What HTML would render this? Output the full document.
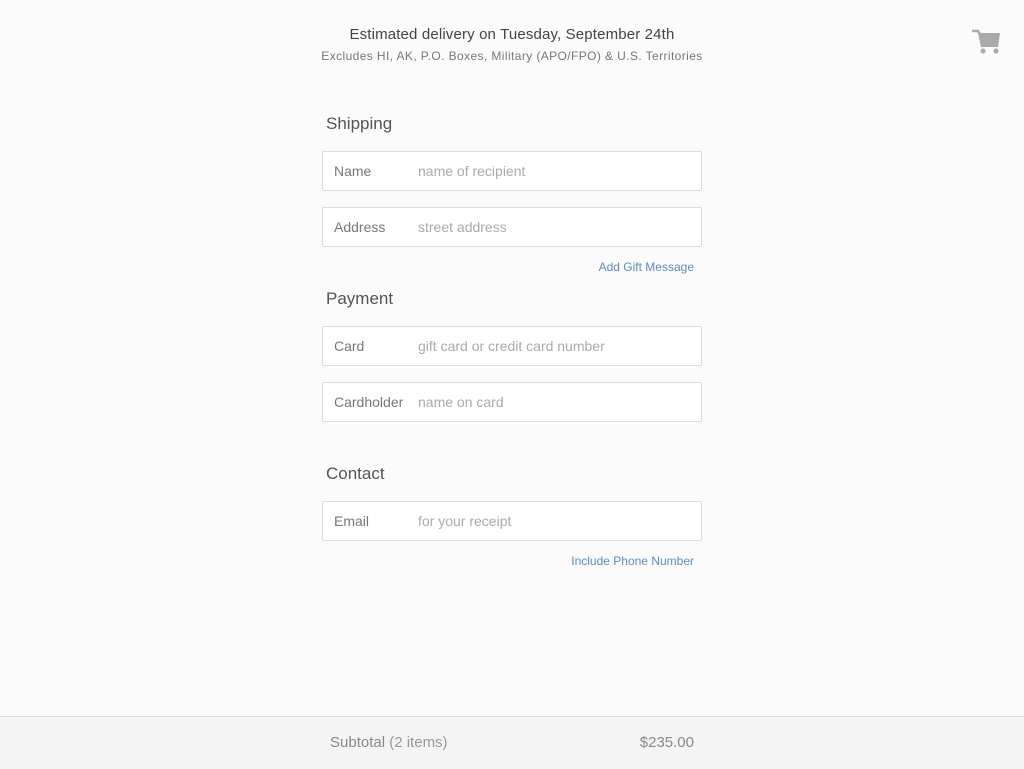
<!DOCTYPE html>
<html><head><style>
body{margin:0;width:1024px;height:768px;background:#fbfbfb;font-family:"Liberation Sans",sans-serif;position:relative;overflow:hidden}
.a{position:absolute;white-space:nowrap}
.in{position:absolute;left:322px;width:378px;height:38px;border:1px solid #dcdcdc;background:#fff;border-radius:2px}
.in .l{position:absolute;left:11px;top:11px;font-size:14px;color:#777}
.in .p{position:absolute;left:95px;top:11px;font-size:14px;color:#aaa}
.h{position:absolute;left:326px;font-size:17px;color:#555}
.lk{position:absolute;right:330px;font-size:12px;color:#5f8ab8}
</style></head><body>
<div class="a" style="left:0;width:1024px;text-align:center;top:26px;font-size:15px;color:#444;letter-spacing:0.15px">Estimated delivery on Tuesday, September 24th</div>
<div class="a" style="left:0;width:1024px;text-align:center;top:49px;font-size:12px;color:#777;letter-spacing:0.4px">Excludes HI, AK, P.O. Boxes, Military (APO/FPO) &amp; U.S. Territories</div>
<svg class="a" style="left:972px;top:28px" width="30" height="27" viewBox="0 0 30 27"><path d="M1 3h5l2 3" stroke="#aaa" stroke-width="2.5" fill="none" stroke-linecap="round"/><path d="M6 5h22l-2 14H9z" fill="#aaa"/><circle cx="11" cy="23" r="2.5" fill="#aaa"/><circle cx="24" cy="23" r="2.5" fill="#aaa"/></svg>
<div class="h" style="top:114px">Shipping</div>
<div class="in" style="top:151px"><span class="l">Name</span><span class="p">name of recipient</span></div>
<div class="in" style="top:207px"><span class="l">Address</span><span class="p">street address</span></div>
<div class="lk" style="top:260px">Add Gift Message</div>
<div class="h" style="top:289px">Payment</div>
<div class="in" style="top:326px"><span class="l">Card</span><span class="p">gift card or credit card number</span></div>
<div class="in" style="top:382px"><span class="l">Cardholder</span><span class="p">name on card</span></div>
<div class="h" style="top:464px">Contact</div>
<div class="in" style="top:501px"><span class="l">Email</span><span class="p">for your receipt</span></div>
<div class="lk" style="top:554px">Include Phone Number</div>
<div class="a" style="left:0;top:716px;width:1024px;height:52px;background:#f4f4f4;border-top:1px solid #dcdcdc"></div>
<div class="a" style="left:330px;top:734px;font-size:15px;color:#888">Subtotal <span style="color:#999">(2 items)</span></div>
<div class="a" style="right:330px;top:734px;font-size:15px;color:#888">$235.00</div>
</body></html>
